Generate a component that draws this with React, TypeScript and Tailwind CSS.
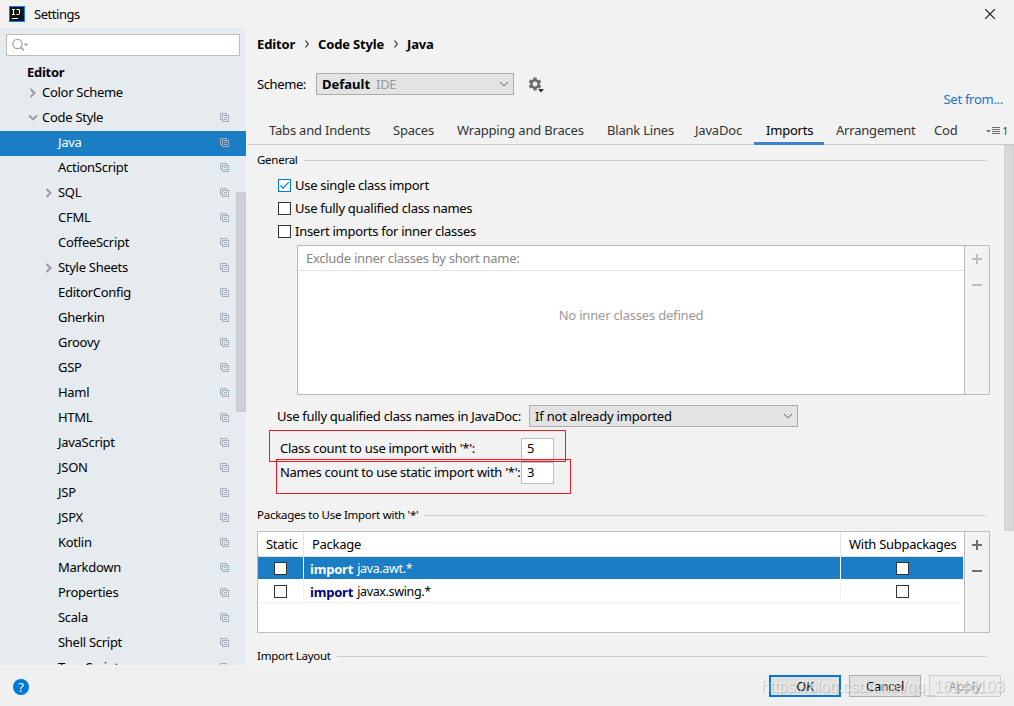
import React from "react";
import { MdSettings } from "react-icons/md";

function CopyIcon() {
  return (
    <svg width="9" height="9" viewBox="0 0 9 9" fill="none" stroke="#a3b0bb" className="shrink-0">
      <path d="M2 6.5H.5V.5H6.5V2" />
      <rect x="2.5" y="2.5" width="6" height="6" />
      <path d="M4 4.5H7M4 6.5H7" />
    </svg>
  );
}

function Chevron({ open }: { open?: boolean }) {
  return (
    <svg width="10" height="10" viewBox="0 0 10 10" fill="none" stroke="#999c9e" strokeWidth="2">
      <path d={open ? "M1 2.4L5 6.4L9 2.4" : "M2.5 1L6.5 5L2.5 9"} />
    </svg>
  );
}

type Row = { label: string; child?: boolean; arrow?: "open" | "closed"; selected?: boolean; noCopy?: boolean };

const rows: Row[] = [
  { label: "Color Scheme", arrow: "closed", noCopy: true },
  { label: "Code Style", arrow: "open" },
  { label: "Java", child: true, selected: true },
  { label: "ActionScript", child: true },
  { label: "SQL", child: true, arrow: "closed" },
  { label: "CFML", child: true },
  { label: "CoffeeScript", child: true },
  { label: "Style Sheets", child: true, arrow: "closed" },
  { label: "EditorConfig", child: true },
  { label: "Gherkin", child: true },
  { label: "Groovy", child: true },
  { label: "GSP", child: true },
  { label: "Haml", child: true },
  { label: "HTML", child: true },
  { label: "JavaScript", child: true },
  { label: "JSON", child: true },
  { label: "JSP", child: true },
  { label: "JSPX", child: true },
  { label: "Kotlin", child: true },
  { label: "Markdown", child: true },
  { label: "Properties", child: true },
  { label: "Scala", child: true },
  { label: "Shell Script", child: true },
  { label: "TypeScript", child: true },
];

function Sidebar() {
  return (
    <aside className="relative flex w-[246px] shrink-0 flex-col overflow-hidden bg-[#e6ebef] pt-1.5">
      <div className="mx-1.5 flex h-[22px] shrink-0 items-center border border-[#bdbdbd] bg-white pl-[5px]">
        <svg width="18" height="14" viewBox="0 0 18 14" fill="none" stroke="#9aa7b0">
          <circle cx="5.5" cy="6" r="4.6" strokeWidth="1.3" />
          <path d="M8.8 9.3L12 12.3" strokeWidth="1.6" />
          <path d="M11.5 5.5H16.5L14 8.3Z" fill="#9aa7b0" stroke="none" />
        </svg>
      </div>
      <div className="h-[25px] shrink-0 pt-[7px] pl-[27px] leading-[19px] font-bold">Editor</div>
      {rows.map((r) => (
        <div
          key={r.label}
          className={`flex h-[25px] shrink-0 items-center pr-[17px] pb-0.5 ${r.selected ? "bg-[#1b7dc4] text-white" : ""} ${r.child ? "pl-11" : "pl-7"}`}
        >
          <span className="flex w-3.5 shrink-0">{r.arrow && <Chevron open={r.arrow === "open"} />}</span>
          <span className="grow pb-px">{r.label}</span>
          {!r.noCopy && <CopyIcon />}
        </div>
      ))}
      <div className="absolute top-[164px] right-0 h-[220px] w-2.5 border border-[#c6cacf] bg-[#cdd1d6]" />
    </aside>
  );
}

function Check({ checked }: { checked?: boolean }) {
  return (
    <span className={`flex size-[13px] shrink-0 items-center justify-center border bg-white ${checked ? "border-[#0078d7]" : "border-[#333]"}`}>
      {checked && (
        <svg width="11" height="11" viewBox="0 0 11 11" fill="none" stroke="#0078d7" strokeWidth="1.2">
          <path d="M1.5 5.5L4.2 8.2L9.8 2.2" />
        </svg>
      )}
    </span>
  );
}

function Heading({ text }: { text: string }) {
  return (
    <div className="flex h-4 items-center gap-1.5 text-[11.5px] tracking-[-0.26px]">
      <span>{text}</span>
      <span className="h-px grow bg-[#cdcdcd]" />
    </div>
  );
}

function PlusMinus({ color }: { color: string }) {
  return (
    <svg width="10" height="38" viewBox="0 0 10 38" fill={color}>
      <path d="M4 1H6V5H10V7H6V11H4V7H0V5H4ZM0 31H10V33H0Z" />
    </svg>
  );
}

function Arrow() {
  return (
    <svg width="10" height="6" viewBox="0 0 10 6" fill="none" stroke="#666">
      <path d="M1 1L5 4.8L9 1" />
    </svg>
  );
}

function Crumb() {
  return (
    <svg width="4" height="8" viewBox="0 0 4 8" fill="none" stroke="#222" strokeWidth="1.1">
      <path d="M.5 .5L3.3 4L.5 7.5" />
    </svg>
  );
}

const tabs = [
  { label: "Tabs and Indents", w: "w-[124px]" },
  { label: "Spaces", w: "w-16" },
  { label: "Wrapping and Braces", w: "w-[150px]" },
  { label: "Blank Lines", w: "w-[88px]" },
  { label: "JavaDoc", w: "w-[71px]" },
  { label: "Imports", w: "w-[70px]" },
  { label: "Arrangement", w: "w-[98px]" },
  { label: "Cod", w: "w-[50px]" },
];

function PackageRow({ name, selected }: { name: string; selected?: boolean }) {
  const line = selected ? "border-white" : "border-[#f2f2f2]";
  return (
    <div className={`mr-px flex h-[23px] border-b ${line} ${selected ? "bg-[#1b7dc4] text-white" : ""}`}>
      <div className={`flex w-[46px] items-center justify-center border-r ${line}`}>
        <Check />
      </div>
      <div className={`flex grow items-center gap-1 border-r pt-0.5 pl-1.5 ${line}`}>
        <b className={`tracking-[-0.2px] ${selected ? "" : "text-[#000080]"}`}>import</b>
        <span className="text-[12.5px] tracking-[-0.35px]">{name}</span>
      </div>
      <div className="flex w-[122px] items-center justify-center">
        <Check />
      </div>
    </div>
  );
}

export default function App() {
  return (
    <div className="relative flex h-[706px] w-[1014px] flex-col overflow-hidden bg-[#f2f2f2] font-['Noto_Sans',sans-serif] text-[13px] leading-[18px] tracking-[-0.28px] whitespace-nowrap text-black">
      <header className="flex h-7 shrink-0 items-center pr-[19px] pl-[9px]">
        <svg width="16" height="16" viewBox="0 0 16 16">
          <rect width="16" height="16" fill="#087cfa" />
          <rect x="1" y="1" width="14" height="14" fill="#151515" />
          <path d="M3 3.5H6M4.5 3.5V8M3 8.5H6M7.5 3.5H10.5V7.5Q10.5 8.5 9.5 8.5H7.5M3 12.5H9" fill="none" stroke="#fff" />
        </svg>
        <span className="ml-[9px] grow tracking-[-0.45px]">Settings</span>
        <svg width="10" height="10" viewBox="0 0 10 10" stroke="#111" strokeWidth="1.1">
          <path d="M0 0L10 10M10 0L0 10" />
        </svg>
      </header>

      <div className="flex h-[637px] shrink-0">
        <Sidebar />
        <main className="flex w-[768px] flex-col overflow-hidden">
          <div className="flex h-8 items-center pl-[11px] font-bold tracking-[-0.15px]">
            <span className="flex w-[61px] items-center justify-between pr-[9px]">Editor<Crumb /></span>
            <span className="flex w-[89px] items-center justify-between pr-[9px]">Code Style<Crumb /></span>
            <span>Java</span>
          </div>
          <div className="flex h-[55px] items-start pl-[11px]">
            <span className="mt-[15px] w-[59px] tracking-[-0.4px]">Scheme:</span>
            <div className="mt-[13px] flex h-[22px] w-[198px] items-center border border-[#adadad] bg-[#e3e3e3] pr-1 pl-[5px]">
              <b className="w-[54px] tracking-normal">Default</b>
              <span className="grow text-[#999]">IDE</span>
              <Arrow />
            </div>
            <div className="relative mt-4 ml-[13px]">
              <MdSettings size={16} color="#6e6e6e" />
              <svg width="6" height="4" viewBox="0 0 6 4" className="absolute top-[13px] left-[11px]">
                <path d="M0 0H6L3 3.5Z" fill="#333" />
              </svg>
            </div>
            <span className="mt-[30px] mr-[11px] ml-auto text-[#1a73c8]">Set from...</span>
          </div>
          <nav className="ml-px flex h-[30px] items-stretch border-b border-[#c9c9c9] pl-2.5 tracking-[-0.2px] text-[#333]">
            {tabs.map((t) => (
              <div key={t.label} className={`${t.w} -mb-px h-[30px] shrink-0 pt-[6px] pl-3 ${t.label === "Imports" ? "border-b-3 border-[#4083c9] text-black" : ""}`}>
                {t.label}
              </div>
            ))}
            <div className="ml-auto flex items-center gap-0.5 pt-0.5 pr-1.5 text-[10px]">
              <svg width="14" height="9" viewBox="0 0 14 9">
                <path d="M0 4H5L2.5 6.5Z" fill="#6e6e6e" />
                <path d="M6 1.5H14M6 3.5H14M6 5.5H14M6 7.5H14" stroke="#6e6e6e" />
              </svg>
              <span>1</span>
            </div>
          </nav>

          <div className="flex grow justify-between overflow-hidden">
            <section className="relative w-[744px] pt-[7px] pl-[11px]">
              <div className="w-[730px]"><Heading text="General" /></div>
              <div className="flex flex-col pt-1.5 pl-[21px]">
                <label className="flex h-[23px] items-center gap-1"><Check checked /><span className="pb-px">Use single class import</span></label>
                <label className="flex h-[23px] items-center gap-1"><Check /><span className="pb-px">Use fully qualified class names</span></label>
                <label className="flex h-[23px] items-center gap-1"><Check /><span className="pb-px">Insert imports for inner classes</span></label>
              </div>
              <div className="mt-[2px] ml-10 flex h-[150px] w-[693px] border border-[#bdbdbd]">
                <div className="flex grow flex-col bg-white text-[#858585]">
                  <div className="h-[25px] border-b border-[#e2e2e2] pt-[3px] pl-2">Exclude inner classes by short name:</div>
                  <div className="pt-[35px] text-center tracking-[-0.2px] text-[#999]">No inner classes defined</div>
                </div>
                <div className="flex w-[25px] justify-center border-l border-[#bdbdbd] pt-[7px]"><PlusMinus color="#bdbdbd" /></div>
              </div>
              <div className="mt-2.5 flex h-[22px] items-center pl-5">
                <span className="w-[252px] pb-px">Use fully qualified class names in JavaDoc:</span>
                <div className="flex h-[22px] w-[269px] items-center border border-[#adadad] bg-[#e3e3e3] pr-1 pl-[5px]">
                  <span className="grow tracking-[-0.2px]">If not already imported</span>
                  <Arrow />
                </div>
              </div>
              <div className="mt-[11px] flex h-6 pl-[23px]">
                <span className="w-[241px] pt-px">Class count to use import with '*':</span>
                <span className="h-[23px] w-[33px] border border-[#bdbdbd] bg-white pl-[5px]">5</span>
              </div>
              <div className="flex h-[22px] pl-[23px]">
                <span className="w-[241px] pt-px">Names count to use static import with '*':</span>
                <span className="h-[22px] w-[33px] border border-[#bdbdbd] bg-white pl-[5px]">3</span>
              </div>
              <div className="mt-[23px] w-[730px]"><Heading text="Packages to Use Import with '*'" /></div>
              <div className="mt-2 flex h-[102px] w-[733px] border border-[#bdbdbd]">
                <div className="flex grow flex-col bg-white">
                  <div className="flex h-[25px] items-center border-b border-[#e2e2e2] pb-px">
                    <span className="h-[22px] w-[46px] border-r border-[#e2e2e2] pt-0.5 pl-2">Static</span>
                    <span className="h-[22px] grow border-r border-[#e2e2e2] pt-0.5 pl-2">Package</span>
                    <span className="h-[22px] w-[123px] pt-0.5 pl-2">With Subpackages</span>
                  </div>
                  <PackageRow name="java.awt.*" selected />
                  <PackageRow name="javax.swing.*" />
                </div>
                <div className="flex w-[25px] justify-center border-l border-[#bdbdbd] pt-[7px]"><PlusMinus color="#6e6e6e" /></div>
              </div>
              <div className="mt-[15px] w-[730px]"><Heading text="Import Layout" /></div>
              <div className="absolute top-[285px] left-[23px] h-8 w-[297px] border border-[#ed1c24]" />
              <div className="absolute top-[314px] left-[30px] h-[35px] w-[295px] border border-[#ed1c24]" />
            </section>
            <div className="h-[386px] w-2.5 border border-[#d2d2d2] bg-[#d9d9d9]" />
          </div>
        </main>
      </div>

      <footer className="flex h-[41px] items-center bg-[#f0f0f0] pr-[13px] pb-px pl-[13px] leading-4">
        <span className="mt-1 flex size-4 items-center justify-center rounded-full bg-[#0078d7] text-[13px] text-white">?</span>
        <div className="mt-0.5 ml-auto flex gap-2">
          <button className="h-[22px] w-[72px] border-2 border-[#0078d7] bg-[#e1e1e1]">OK</button>
          <button className="h-[22px] w-[72px] border border-[#adadad] bg-[#e1e1e1] tracking-[-0.45px]">Cancel</button>
          <button className="h-[22px] w-[72px] border border-[#cfcfcf] bg-[#ebebeb] text-[#a0a0a0]">Apply</button>
        </div>
      </footer>
      <div className="pointer-events-none absolute top-[677px] left-[761px] font-['Liberation_Sans',sans-serif] text-base leading-[19px] tracking-[-0.07px] text-white/60 [text-shadow:1px_1px_1px_rgba(120,120,120,0.4)]">
        https://blog.csdn.net/qq_16146103
      </div>
    </div>
  );
}
